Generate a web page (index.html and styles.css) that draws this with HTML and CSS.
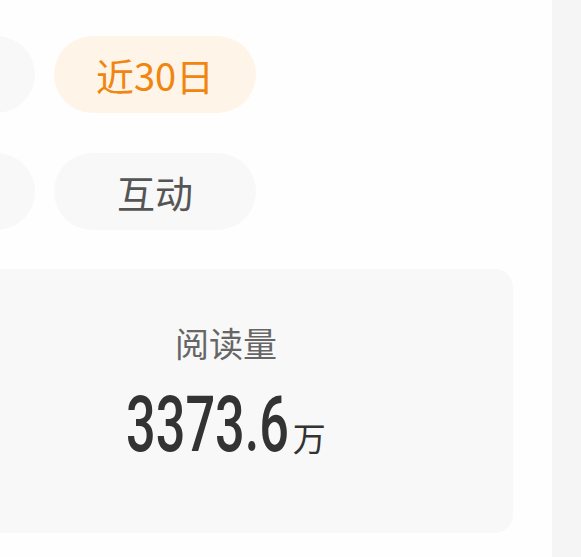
FILE: index.html
```html
<!DOCTYPE html>
<html lang="zh">
<head>
<meta charset="utf-8">
<link rel="stylesheet" href="styles.css">
</head>
<body>
<div class="page">
  <div class="main">
    <div class="pill-row">
      <div class="pill"></div>
      <div class="pill pill-active">近30日</div>
    </div>
    <div class="pill-row">
      <div class="pill"></div>
      <div class="pill">互动</div>
    </div>
    <div class="card">
      <div class="card-title">阅读量</div>
      <div class="card-value"><span class="num">3373.6</span><span class="unit">万</span></div>
    </div>
  </div>
  <div class="side"></div>
</div>
</body>
</html>
```
FILE: styles.css
```css
html, body {
  margin: 0;
  padding: 0;
  background: #fefefe;
}
body {
  font-family: "Noto Sans CJK SC", "Noto Sans", sans-serif;
  width: 581px;
  height: 557px;
  overflow: hidden;
}
.page {
  display: flex;
  height: 557px;
}
.main {
  width: 552px;
  flex: none;
  overflow: hidden;
  padding-top: 36px;
  box-sizing: border-box;
}
.side {
  flex: 1;
  background: #f5f5f5;
}
.pill-row {
  display: flex;
  gap: 19px;
  margin-left: -167px;
  margin-bottom: 40px;
}
.pill {
  flex: none;
  width: 202px;
  height: 77px;
  border-radius: 39px;
  background: #f8f8f8;
  color: #555555;
  font-size: 38px;
  display: flex;
  align-items: center;
  justify-content: center;
}
.pill-active {
  background: #fff4e8;
  color: #f0850f;
}
.card {
  margin-left: -61px;
  margin-top: -1px;
  width: 574px;
  height: 264px;
  border-radius: 18px;
  background: #f8f8f8;
  display: flex;
  flex-direction: column;
  align-items: center;
  padding-top: 54px;
  box-sizing: border-box;
}
.card-title {
  font-size: 34px;
  line-height: 40px;
  color: #666666;
}
.card-value {
  margin-top: 23px;
  display: flex;
  align-items: baseline;
  color: #333333;
}
.num {
  display: inline-block;
  font-family: Roboto, "Liberation Sans", sans-serif;
  font-weight: 500;
  font-size: 78px;
  line-height: 78px;
  transform: scaleX(0.67);
  transform-origin: left center;
  margin-right: -79px;
}
.unit {
  font-size: 33px;
  margin-left: 2px;
}
```
